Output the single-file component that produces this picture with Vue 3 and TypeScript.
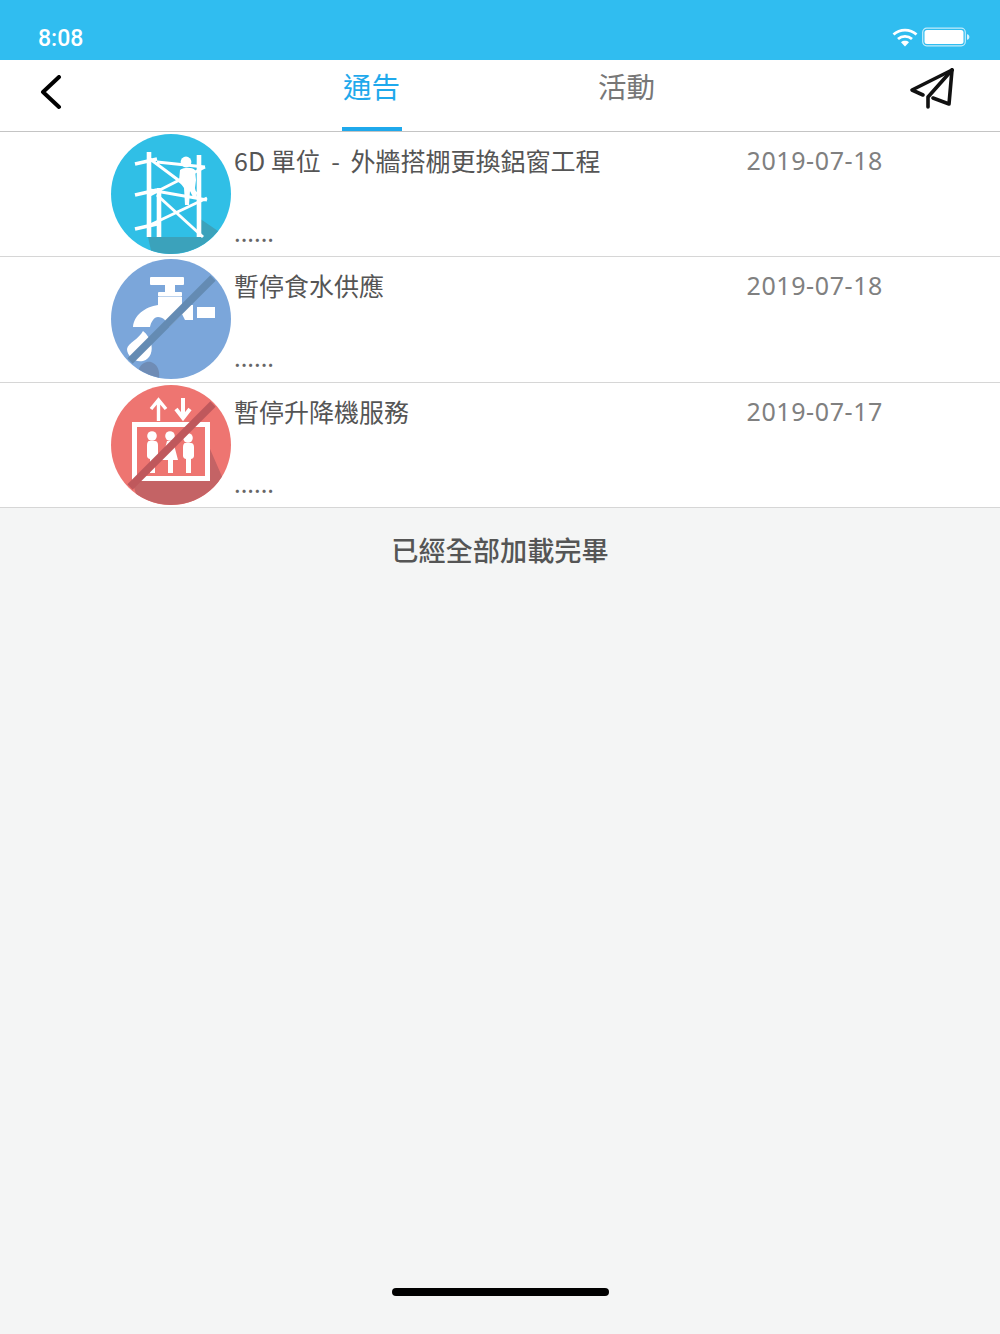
<script setup lang="ts">
import { ref } from 'vue'

interface Notice {
  id: number
  kind: 'scaffold' | 'water' | 'lift'
  title: string
  date: string
}

const tabs = ['通告', '活動']
const activeTab = ref('通告')

const notices: Notice[] = [
  { id: 1, kind: 'scaffold', title: '6D 單位 - 外牆搭棚更換鋁窗工程', date: '2019-07-18' },
  { id: 2, kind: 'water', title: '暫停食水供應', date: '2019-07-18' },
  { id: 3, kind: 'lift', title: '暫停升降機服務', date: '2019-07-17' },
]
</script>

<template>
  <div class="page">
    <div class="status-bar">
      <span class="time">8:08</span>
      <div class="status-icons">
        <svg width="26" height="20" viewBox="0 0 26 20" fill="none" stroke="#fff" stroke-width="2.8">
          <path d="M1.5 7.5C8 1.6 18 1.6 24.5 7.5" />
          <path d="M6 12C10 8.5 16 8.5 20 12" />
          <path d="M13 19.5L9 15.2C11.3 13.4 14.7 13.4 17 15.2Z" fill="#fff" stroke="none" />
        </svg>
        <svg width="48" height="20" viewBox="0 0 48 20">
          <rect x="0.7" y="1.2" width="42.6" height="17.6" rx="4" fill="none" stroke="#fff" stroke-opacity="0.7" stroke-width="1.2" />
          <rect x="2.5" y="3" width="39" height="14" rx="2.5" fill="#fff" />
          <path d="M45 7.2C46.6 7.5 47.4 8.6 47.4 10S46.6 12.5 45 12.8Z" fill="#fff" fill-opacity="0.8" />
        </svg>
      </div>
    </div>

    <div class="nav">
      <svg class="back" width="24" height="36" viewBox="0 0 24 36" fill="none" stroke="#000" stroke-width="4" stroke-linecap="round" stroke-linejoin="round">
        <path d="M21 2L5 17L21 32" />
      </svg>
      <div class="tabs">
        <button
          v-for="tab in tabs"
          :key="tab"
          :class="['tab', { active: activeTab === tab }]"
          @click="activeTab = tab"
        >
          {{ tab }}
        </button>
      </div>
      <svg class="send" width="48" height="44" viewBox="0 0 48 44" fill="none" stroke="#111" stroke-width="3.6" stroke-linejoin="round" stroke-linecap="round">
        <path d="M44 3L4 23L15 28" />
        <path d="M44 3L20 30V40" />
        <path d="M44 3L41 37L25 31" />
      </svg>
    </div>

    <ul class="list">
      <li v-for="item in notices" :key="item.id" class="row">
        <svg class="icon" width="120" height="120" viewBox="0 0 120 120">
          <template v-if="item.kind === 'scaffold'">
            <circle cx="60" cy="60" r="60" fill="#30bfe6" />
            <path d="M37 103H88V84L107 97A60 60 0 0 1 40 116.6Z" fill="#3ba2bb" />
            <g stroke="#fff" fill="none">
              <path d="M38 18V103M48 54V103M88 21V103" stroke-width="4.6" />
              <path d="M24 30L46 25M24 61L46 56M24 95L46 90" stroke-width="3.6" />
              <path d="M39 25L86 60M39 61L94 33M46 28L94 33M39 56L96 66M39 91L96 64M46 61L92 103" stroke-width="3" />
            </g>
            <circle cx="75" cy="28" r="5.4" fill="#fff" />
            <path d="M69 36C73 33 81 33 84 36L85 46L84 54L86 63H82L79 57L78 71H74L73 54L68 47Z" fill="#fff" />
          </template>

          <template v-else-if="item.kind === 'water'">
            <circle cx="60" cy="60" r="60" fill="#7ba6da" />
            <path d="M28 110C30 104 36 102 40 103C46 105 49 111 48 118.8A60 60 0 0 1 28 110.6Z" fill="#6f8cb5" />
            <g fill="#fff">
              <rect x="39" y="18" width="34" height="8" rx="1" />
              <rect x="54" y="26" width="10" height="8" />
              <rect x="47" y="33" width="24" height="4.5" rx="1" />
              <path d="M47 38H71V46H82V61H74L71 55L58 68C56 62 52 58 47 58C43 58 40 63 39 68H22C23 56 34 48 47 46Z" />
              <rect x="86" y="48" width="18" height="11" />
              <path d="M32 72C36 75 39 80 40 84C42 91 40 100 32 102C24 104 16 97 16 90C17 84 28 80 32 72Z" />
            </g>
            <path d="M102 19L19 102" stroke="#648bb3" stroke-width="7.5" fill="none" />
          </template>

          <template v-else>
            <circle cx="60" cy="60" r="60" fill="#ee7571" />
            <path d="M21 96H99V64L111 91.6A60 60 0 0 1 25 108.7Z" fill="#c46365" />
            <path d="M21 37H99V96H21ZM26 42V91H94V42Z" fill="#fff" fill-rule="evenodd" />
            <g stroke="#fff" fill="none">
              <path d="M47.5 36V15M40 24L47.5 15L55 24" stroke-width="3.4" />
              <path d="M72 13V33" stroke-width="4" />
              <path d="M65 24L72 33L79 24" stroke-width="4" />
            </g>
            <g fill="#fff">
              <circle cx="41" cy="51" r="4.8" />
              <path d="M38 56H44C46 56 47 58 47 60V71C47 73 45 74 44 74V88H39V74C38 74 36 73 36 71V60C36 58 37 56 38 56Z" />
              <circle cx="59" cy="51" r="4.8" />
              <path d="M56 56H62L67 75H62V88H57V75H51Z" />
              <circle cx="77" cy="53" r="4.8" />
              <path d="M74 58H80C82 58 83 60 83 62V71C83 73 81 74 80 74V88H75V74C74 74 72 73 72 71V62C72 60 73 58 74 58Z" />
            </g>
            <path d="M102 19L19 102" stroke="#bf585c" stroke-width="7.5" fill="none" />
          </template>
        </svg>
        <div class="body">
          <div class="head">
            <span class="title">
              <template v-for="(part, i) in item.title.split(' - ')" :key="i"><span v-if="i" class="dash">{{ ' - ' }}</span>{{ part }}</template>
            </span>
            <span class="date">{{ item.date }}</span>
          </div>
          <div class="summary">......</div>
        </div>
      </li>
    </ul>

    <div class="footer">
      <p class="done">已經全部加載完畢</p>
      <div class="home-bar"></div>
    </div>
  </div>
</template>

<style scoped>
.page {
  height: 1334px;
  display: flex;
  flex-direction: column;
  font-family: 'Noto Sans CJK TC', 'Noto Sans', sans-serif;
  background: #fff;
}

.status-bar {
  height: 60px;
  padding: 0 30px 0 38px;
  box-sizing: border-box;
  display: flex;
  justify-content: space-between;
  align-items: center;
  background: #30bdf0;
  color: #fff;
}

.time {
  font-family: Roboto, sans-serif;
  font-size: 23px;
  font-weight: 500;
  margin-top: 16px;
}

.status-icons {
  display: flex;
  align-items: center;
  gap: 4px;
  margin-top: 14px;
}

.nav {
  height: 72px;
  box-sizing: border-box;
  display: flex;
  align-items: center;
  justify-content: space-between;
  padding: 0 44px 0 38px;
  border-bottom: 1px solid #c4c4c4;
}

.back {
  margin-top: -6px;
}

.send {
  margin-top: -14px;
}

.tabs {
  display: flex;
  gap: 195px;
  align-self: stretch;
  margin-left: 28px;
}

.tab {
  width: 60px;
  padding: 0 0 19px;
  border: none;
  background: none;
  font-family: inherit;
  font-size: 28.5px;
  line-height: 52px;
  color: #777;
  cursor: pointer;
  position: relative;
}

.tab.active {
  color: #1fa9ec;
}

.tab.active::after {
  content: '';
  position: absolute;
  left: 0;
  right: 0;
  bottom: 0;
  height: 4px;
  background: #1fa9ec;
}

.list {
  list-style: none;
  margin: 0;
  padding: 0;
}

.row {
  height: 125.33px;
  box-sizing: border-box;
  display: flex;
  align-items: flex-start;
  padding: 2px 117px 0 111px;
  border-bottom: 1px solid #d6d6d6;
}

.icon {
  flex: none;
}

.body {
  flex: 1;
  padding: 4px 0 0 3px;
}

.head {
  display: flex;
  justify-content: space-between;
  align-items: center;
}

.title {
  font-size: 25px;
  line-height: 42px;
  color: #555;
}

.dash {
  word-spacing: 5px;
}

.date {
  font-family: 'Noto Sans', sans-serif;
  font-size: 25px;
  line-height: 44px;
  letter-spacing: 0.6px;
  color: #808080;
}

.summary {
  margin-top: 32px;
  font-size: 24px;
  line-height: 36px;
  color: #666;
}

.footer {
  flex: 1;
  display: flex;
  flex-direction: column;
  align-items: center;
  justify-content: space-between;
  padding: 20px 0 38px;
  background: #f4f5f5;
}

.done {
  margin: 0;
  font-size: 27.2px;
  font-weight: 500;
  line-height: 42px;
  color: #555;
}

.home-bar {
  width: 217px;
  height: 8px;
  border-radius: 4px;
  background: #000;
}
</style>
